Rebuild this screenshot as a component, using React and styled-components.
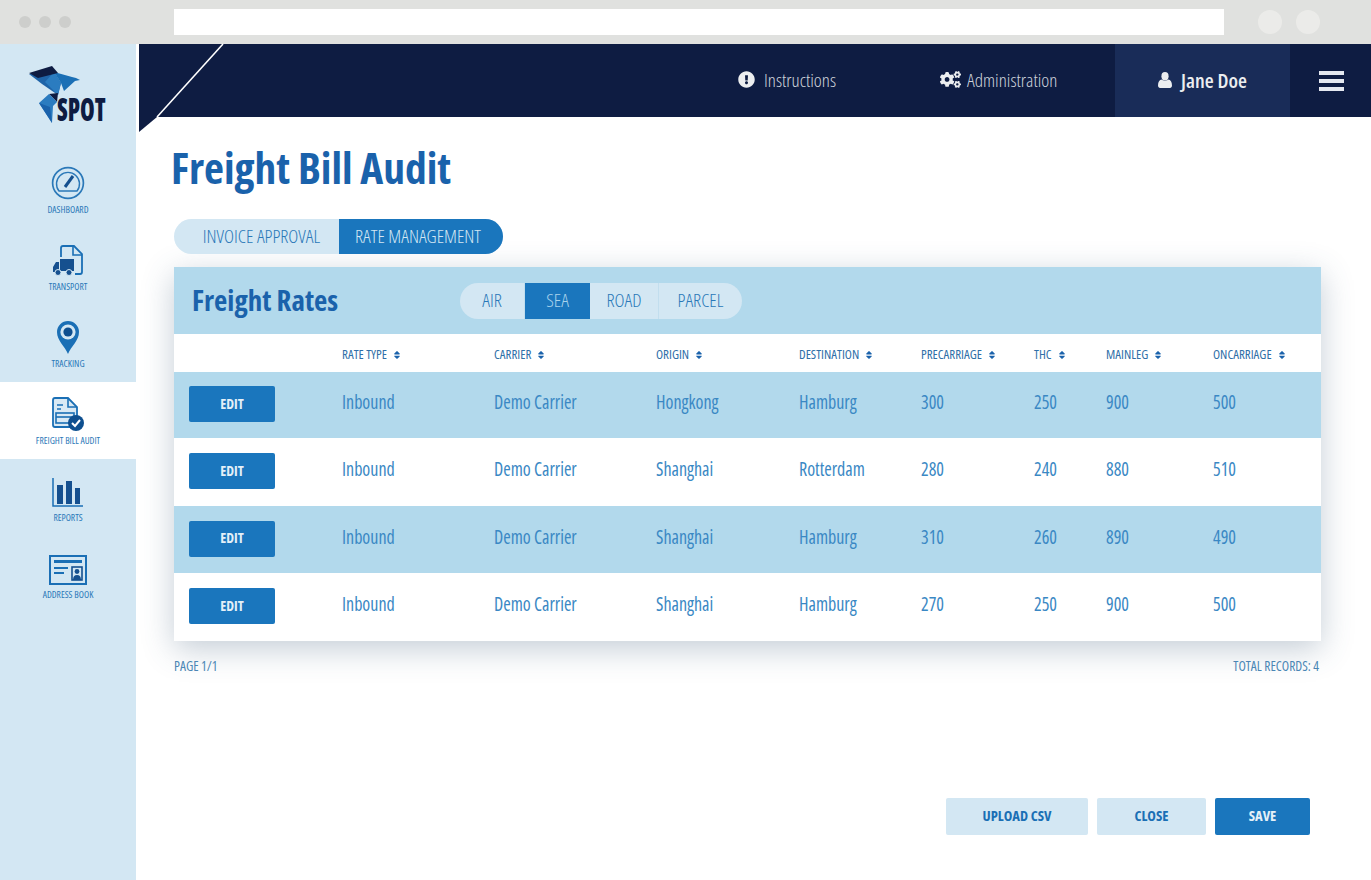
import React from "react";
import styled, { createGlobalStyle } from "styled-components";
import { FaExclamationCircle, FaCogs, FaSort } from "react-icons/fa";

const GlobalStyle = createGlobalStyle`
  html, body { margin: 0; padding: 0; background: #fff; }
  body { font-family: "Open Sans", "Liberation Sans", sans-serif; font-stretch: 75%; color: #1a6fb5; }
  * { box-sizing: border-box; }
`;

const rows = [
  { alt: true, h: 66, origin: "Hongkong", dest: "Hamburg", vals: [300, 250, 900, 500] },
  { alt: false, h: 68, origin: "Shanghai", dest: "Rotterdam", vals: [280, 240, 880, 510] },
  { alt: true, h: 67, origin: "Shanghai", dest: "Hamburg", vals: [310, 260, 890, 490] },
  { alt: false, h: 68, origin: "Shanghai", dest: "Hamburg", vals: [270, 250, 900, 500] },
];
const heads = ["RATE TYPE", "CARRIER", "ORIGIN", "DESTINATION", "PRECARRIAGE", "THC", "MAINLEG", "ONCARRIAGE"];

function Logo() {
  return (
    <LogoBox>
      <svg width="56" height="58" viewBox="0 0 56 58">
        <polygon points="1,8 26,6 33,17 30,29 14,18" fill="#1f64a8" />
        <polygon points="26,6 33,17 30,29 17,16" fill="#2b7cc0" />
        <polygon points="26,6 44,11 48,12 52,14 47,15 36,25 33,17" fill="#1a6fb5" />
        <polygon points="1,7 24,0 30,7 10,12" fill="#0e1c42" />
        <polygon points="21,28 30,27 29,36" fill="#0e1c42" />
        <polygon points="11,37 21,28 29,36 25,40 24,57" fill="#2b7cc0" />
        <polygon points="11,37 22,41 24,57" fill="#1a62ab" />
      </svg>
      <LogoText>SPOT</LogoText>
    </LogoBox>
  );
}

const iconColor = "#1a6fb5";

function DashIcon() {
  return (
    <svg width="34" height="34" viewBox="0 0 34 34" fill="none" stroke="#2a78b8">
      <circle cx="17" cy="17" r="15.4" strokeWidth="1.7" />
      <path d="M8 25 A11.5 11.5 0 1 1 26 25 Z" strokeWidth="1.4" />
      <path d="M14 21 L22 10" strokeWidth="3" stroke="#15508f" />
    </svg>
  );
}
function TransportIcon() {
  return (
    <svg width="30" height="32" viewBox="0 0 30 32">
      <path d="M8 12 V3 Q8 1 10 1 H21 L29 9 V27 Q29 29 27 29 H22" fill="none" stroke={iconColor} strokeWidth="1.8" />
      <path d="M20 1 V10 H29" fill="none" stroke={iconColor} strokeWidth="1.6" />
      <rect x="7" y="14" width="14" height="12" fill="#15508f" />
      <path d="M6 17 H3 L0 22 V27 H6 Z" fill="#15508f" />
      <circle cx="5" cy="27.5" r="3" fill="#15508f" stroke="#d3e7f3" />
      <circle cx="16" cy="27.5" r="3" fill="#15508f" stroke="#d3e7f3" />
    </svg>
  );
}
function TrackIcon() {
  return (
    <svg width="24" height="34" viewBox="0 0 24 34">
      <path d="M12 34 C9 26 1 21 1 12 A11 11 0 0 1 23 12 C23 21 15 26 12 34 Z" fill={iconColor} />
      <circle cx="12" cy="12" r="7.6" fill="#d3e7f3" />
      <circle cx="12" cy="12" r="4.6" fill="#0e4f8f" />
    </svg>
  );
}
function AuditIcon() {
  return (
    <svg width="34" height="34" viewBox="0 0 34 34">
      <path d="M2 3 Q2 1 4 1 H17 L26 10 V30 H4 Q2 30 2 28 Z" fill="#d9e9f4" stroke={iconColor} strokeWidth="1.8" />
      <path d="M17 1 V10 H26" fill="none" stroke={iconColor} strokeWidth="1.6" />
      <path d="M6 8 H12 M6 12 H10" stroke={iconColor} strokeWidth="1.6" />
      <rect x="5" y="16" width="18" height="10" fill="none" stroke={iconColor} strokeWidth="1.6" />
      <path d="M5 20 H23" stroke={iconColor} strokeWidth="1.6" />
      <circle cx="25" cy="26" r="8" fill="#0e4f8f" />
      <path d="M21 26 L24 29 L29 23" fill="none" stroke="#fff" strokeWidth="2" />
    </svg>
  );
}
function ReportIcon() {
  return (
    <svg width="32" height="30" viewBox="0 0 32 30">
      <path d="M1 0 V28 H31" fill="none" stroke={iconColor} strokeWidth="1.5" />
      <rect x="5" y="7" width="6" height="19" fill="#15508f" />
      <rect x="14" y="3" width="6" height="23" fill="#15508f" />
      <rect x="23" y="10" width="5" height="16" fill="#15508f" />
    </svg>
  );
}
function AddressIcon() {
  return (
    <svg width="38" height="30" viewBox="0 0 38 30">
      <rect x="1" y="1" width="36" height="28" fill="none" stroke={iconColor} strokeWidth="2" />
      <rect x="5" y="5" width="28" height="3" fill={iconColor} />
      <path d="M5 13 H19 M5 18 H15" stroke={iconColor} strokeWidth="2" />
      <rect x="23" y="12" width="10" height="13" fill="none" stroke="#15508f" strokeWidth="1.6" />
      <circle cx="28" cy="16.5" r="2.4" fill="#15508f" />
      <path d="M24 25 Q24 20 28 20 Q32 20 32 25 Z" fill="#15508f" />
    </svg>
  );
}
function UserIcon() {
  return (
    <svg width="14" height="16" viewBox="0 0 14 16" fill="#eceef0">
      <ellipse cx="7" cy="4.2" rx="3.6" ry="4.2" />
      <path d="M0 13.5 C0 10 1.5 8 3.6 7.6 C5 9 9 9 10.4 7.6 C12.5 8 14 10 14 13.5 C14 15 13 16 12 16 H2 C1 16 0 15 0 13.5 Z" />
    </svg>
  );
}

const navItems = [
  { label: "DASHBOARD", icon: <DashIcon /> },
  { label: "TRANSPORT", icon: <TransportIcon /> },
  { label: "TRACKING", icon: <TrackIcon /> },
  { label: "FREIGHT BILL AUDIT", icon: <AuditIcon />, active: true },
  { label: "REPORTS", icon: <ReportIcon /> },
  { label: "ADDRESS BOOK", icon: <AddressIcon /> },
];

export default function App() {
  return (
    <Page>
      <GlobalStyle />
      <BrowserBar>
        <Dots>
          <Dot />
          <Dot />
          <Dot />
        </Dots>
        <AddressBar />
        <Round />
        <Round />
      </BrowserBar>
      <Body>
        <Sidebar>
          <Logo />
          {navItems.map((item) => (
            <NavItem key={item.label} $active={item.active}>
              <NavIcon>{item.icon}</NavIcon>
              <NavLabel>{item.label}</NavLabel>
            </NavItem>
          ))}
        </Sidebar>
        <Main>
          <TopBar>
            <Slash width="90" height="90" viewBox="0 0 90 90">
              <polygon points="0,73 18,73 0,88" fill="#0e1c42" />
              <line x1="18" y1="73" x2="84" y2="0" stroke="#fff" strokeWidth="1.6" />
            </Slash>
            <TopLink $w={202} $gap={9}>
              <FaExclamationCircle size={17} />
              <span>Instructions</span>
            </TopLink>
            <TopLink $w={175} $gap={6}>
              <FaCogs size={21} />
              <span>Administration</span>
            </TopLink>
            <UserBox>
              <UserIcon />
              <span>Jane Doe</span>
            </UserBox>
            <Burger>
              <i />
              <i />
              <i />
            </Burger>
          </TopBar>
          <Content>
            <Title>Freight Bill Audit</Title>
            <Tabs>
              <Tab>INVOICE APPROVAL</Tab>
              <Tab $active>RATE MANAGEMENT</Tab>
            </Tabs>
            <Card>
              <CardHead>
                <CardTitle>Freight Rates</CardTitle>
                <Modes>
                  <Mode $w={65}>AIR</Mode>
                  <Mode $w={65} $active>SEA</Mode>
                  <Mode $w={69}>ROAD</Mode>
                  <Mode $w={83} $last>PARCEL</Mode>
                </Modes>
              </CardHead>
              <HeadRow>
                <span />
                {heads.map((h) => (
                  <HeadCell key={h}>
                    {h}
                    <FaSort size={10} />
                  </HeadCell>
                ))}
              </HeadRow>
              {rows.map((r, i) => (
                <Row key={i} $alt={r.alt} $h={r.h}>
                  <EditBtn>EDIT</EditBtn>
                  <Cell>Inbound</Cell>
                  <Cell>Demo Carrier</Cell>
                  <Cell>{r.origin}</Cell>
                  <Cell>{r.dest}</Cell>
                  {r.vals.map((v, j) => (
                    <Cell key={j}>{v}</Cell>
                  ))}
                </Row>
              ))}
            </Card>
            <Meta>
              <span>PAGE 1/1</span>
              <span>TOTAL RECORDS: 4</span>
            </Meta>
            <Actions>
              <ActionBtn $w={142}>UPLOAD CSV</ActionBtn>
              <ActionBtn $w={109}>CLOSE</ActionBtn>
              <ActionBtn $w={95} $primary>SAVE</ActionBtn>
            </Actions>
          </Content>
        </Main>
      </Body>
    </Page>
  );
}

const Page = styled.div`
  width: 1371px;
  height: 880px;
  overflow: hidden;
  display: flex;
  flex-direction: column;
`;
const BrowserBar = styled.div`
  height: 44px;
  background: #e0e1df;
  display: flex;
  align-items: center;
  flex-shrink: 0;
  padding-bottom: 1px;
`;
const Dots = styled.div`
  width: 174px;
  display: flex;
  gap: 8px;
  padding-left: 19px;
`;
const Dot = styled.div`
  width: 12px;
  height: 12px;
  border-radius: 50%;
  background: #cdcecc;
`;
const AddressBar = styled.div`
  width: 1050px;
  height: 26px;
  background: #fff;
  margin-right: 34px;
`;
const Round = styled.div`
  width: 24px;
  height: 24px;
  border-radius: 50%;
  background: #ebebe9;
  margin-right: 14px;
`;
const Body = styled.div`
  flex: 1;
  display: flex;
  min-height: 0;
`;
const Sidebar = styled.div`
  width: 136px;
  background: #d3e7f3;
  flex-shrink: 0;
`;
const LogoBox = styled.div`
  height: 107px;
  position: relative;
  padding: 22px 0 0 28px;
`;
const LogoText = styled.div`
  position: absolute;
  left: 57px;
  top: 47px;
  font-size: 32px;
  line-height: 36px;
  font-weight: 800;
  color: #0e1c42;
  transform: scaleX(0.74);
  transform-origin: left center;
`;
const NavItem = styled.div`
  height: 77px;
  background: ${(p) => (p.$active ? "#fff" : "transparent")};
  display: flex;
  flex-direction: column;
  align-items: center;
`;
const NavIcon = styled.div`
  height: 51px;
  display: flex;
  align-items: flex-end;
  justify-content: center;
  padding-bottom: 2px;
  svg { display: block; }
`;
const NavLabel = styled.div`
  font-size: 9.5px;
  line-height: 12px;
  margin-top: 2px;
  color: #2a78b8;
  white-space: nowrap;
`;
const Main = styled.div`
  flex: 1;
  min-width: 0;
  margin-left: 3px;
`;
const TopBar = styled.div`
  height: 73px;
  background: #0e1c42;
  display: flex;
  justify-content: flex-end;
  position: relative;
  color: #cdd2da;
`;
const Slash = styled.svg`
  position: absolute;
  left: 0;
  top: 0;
  overflow: visible;
`;
const TopLink = styled.div`
  width: ${(p) => p.$w}px;
  display: flex;
  align-items: center;
  gap: ${(p) => p.$gap}px;
  padding-bottom: 2px;
  font-size: 19px;
  font-weight: 300;
  svg { flex-shrink: 0; color: #eceef0; }
`;
const UserBox = styled.div`
  width: 175px;
  background: #192c58;
  display: flex;
  align-items: center;
  justify-content: center;
  gap: 9px;
  padding-bottom: 2px;
  font-size: 20.5px;
  font-weight: 600;
  color: #eceef0;
`;
const Burger = styled.div`
  width: 81px;
  padding-left: 2px;
  display: flex;
  flex-direction: column;
  justify-content: center;
  align-items: center;
  gap: 4px;
  i {
    display: block;
    width: 25px;
    height: 4px;
    background: #e4e8f0;
  }
`;
const Content = styled.div`
  padding: 24px 50px 0 35px;
`;
const Title = styled.h1`
  margin: 0 0 0 -3px;
  font-size: 43.5px;
  line-height: 54px;
  font-weight: 700;
  color: #1a62ab;
`;
const Tabs = styled.div`
  display: inline-flex;
  height: 35px;
  margin-top: 24px;
  background: #d3e7f3;
  border-radius: 18px;
  overflow: hidden;
`;
const Tab = styled.div`
  width: ${(p) => (p.$active ? 164 : 165)}px;
  display: flex;
  align-items: center;
  justify-content: center;
  padding: ${(p) => (p.$active ? "0 6px 2px 0" : "0 0 2px 10px")};
  font-size: 19px;
  font-weight: 300;
  background: ${(p) => (p.$active ? "#1a76bd" : "transparent")};
  color: ${(p) => (p.$active ? "#d3e7f3" : "#2a78b8")};
`;
const Card = styled.div`
  width: 1147px;
  margin-top: 13px;
  background: #fff;
  box-shadow: 0 8px 30px rgba(60, 90, 120, 0.3);
`;
const CardHead = styled.div`
  height: 67px;
  background: #b2d9ec;
  display: flex;
  align-items: center;
  padding: 0 18px;
`;
const CardTitle = styled.div`
  width: 268px;
  padding-bottom: 3px;
  font-size: 29px;
  font-weight: 700;
  color: #1a62ab;
`;
const Modes = styled.div`
  display: flex;
  height: 36px;
  border-radius: 18px;
  overflow: hidden;
  background: #d3e7f3;
`;
const Mode = styled.div`
  width: ${(p) => p.$w}px;
  display: flex;
  align-items: center;
  justify-content: center;
  padding-bottom: 2px;
  font-size: 19px;
  font-weight: 300;
  background: ${(p) => (p.$active ? "#1a76bd" : "transparent")};
  color: ${(p) => (p.$active ? "#a9d3ec" : "#2a78b8")};
  border-right: ${(p) => (p.$last || p.$active ? "none" : "1px solid #c2deee")};
`;
const columns = "168px 152px 162px 143px 122px 113px 72px 107px 108px";
const HeadRow = styled.div`
  display: grid;
  grid-template-columns: ${columns};
  height: 38px;
  align-items: center;
`;
const HeadCell = styled.div`
  padding-top: 1px;
  font-size: 13px;
  font-weight: 400;
  color: #2f6fa8;
  white-space: nowrap;
  svg { vertical-align: -1px; margin-left: 5px; color: #1a62ab; }
`;
const Row = styled.div`
  display: grid;
  grid-template-columns: ${columns};
  height: ${(p) => p.$h}px;
  align-items: center;
  background: ${(p) => (p.$alt ? "#b2d9ec" : "#fff")};
`;
const EditBtn = styled.div`
  width: 86px;
  height: 36px;
  margin: 0 0 2px 15px;
  background: #1a76bd;
  border-radius: 2px;
  display: flex;
  align-items: center;
  justify-content: center;
  padding-bottom: 2px;
  font-size: 14px;
  font-weight: 700;
  color: #e4f0f8;
`;
const Cell = styled.div`
  padding-bottom: 7px;
  font-size: 20px;
  font-weight: 400;
  color: #3a88c4;
  white-space: nowrap;
  transform: scaleX(0.9);
  transform-origin: left center;
`;
const Meta = styled.div`
  width: 1145px;
  display: flex;
  justify-content: space-between;
  margin-top: 15px;
  font-size: 13.5px;
  line-height: 20px;
  color: #4a86b5;
`;
const Actions = styled.div`
  width: 1136px;
  display: flex;
  justify-content: flex-end;
  gap: 9px;
  margin-top: 122px;
`;
const ActionBtn = styled.div`
  width: ${(p) => p.$w}px;
  height: 37px;
  border-radius: 2px;
  display: flex;
  align-items: center;
  justify-content: center;
  padding-bottom: 3px;
  font-size: 14.5px;
  font-weight: 700;
  background: ${(p) => (p.$primary ? "#1a76bd" : "#d3e7f3")};
  color: ${(p) => (p.$primary ? "#e4f0f8" : "#1a6fb5")};
`;
